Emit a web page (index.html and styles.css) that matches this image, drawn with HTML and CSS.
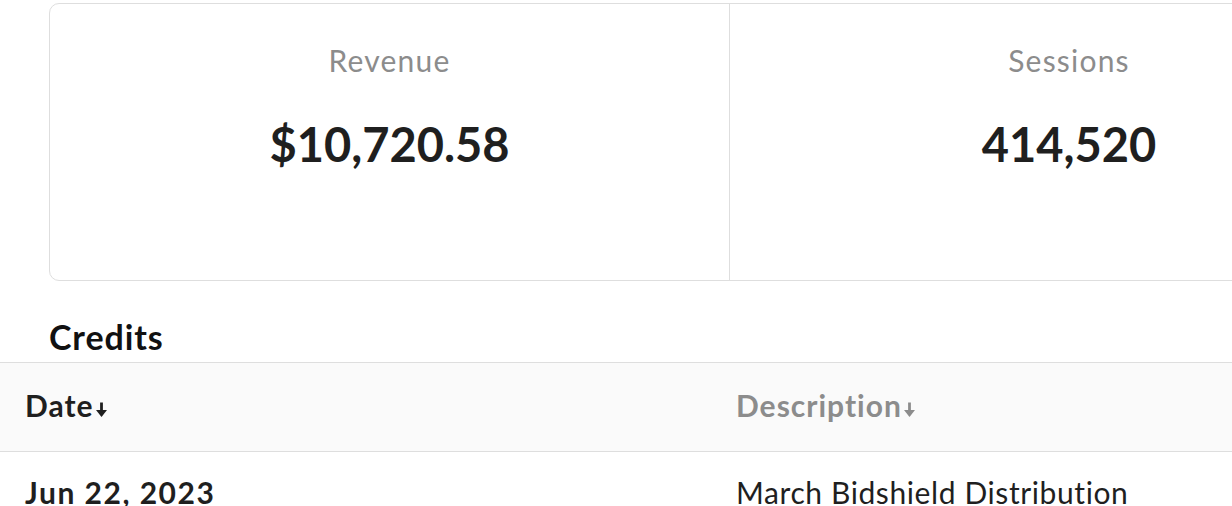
FILE: index.html
```html
<!DOCTYPE html>
<html lang="en">

<head>
    <meta charset="UTF-8">
    <title>Credits</title>
    <link rel="stylesheet" href="styles.css">
</head>

<body>
    <!-- stat cards -->
    <div class="stats">
        <div class="stat">
            <p class="stat-label">Revenue</p>
            <p class="stat-value">$10,720.58</p>
        </div>
        <div class="stat">
            <p class="stat-label">Sessions</p>
            <p class="stat-value">414,520</p>
        </div>
    </div>

    <h2 class="section-title">Credits</h2>

    <!-- credits table -->
    <table class="credits">
        <thead>
            <tr>
                <th class="col-date">Date<svg class="sort" viewBox="0 0 13 15"><path d="M6.5 0.5v9" stroke="currentColor" stroke-width="2.8"/><path d="M1 8h11l-5.5 7z" fill="currentColor"/></svg></th>
                <th class="col-desc muted">Description<svg class="sort" viewBox="0 0 13 15"><path d="M6.5 0.5v9" stroke="currentColor" stroke-width="2.8"/><path d="M1 8h11l-5.5 7z" fill="currentColor"/></svg></th>
            </tr>
        </thead>
        <tbody>
            <tr>
                <td class="col-date date">Jun 22, 2023</td>
                <td class="col-desc">March Bidshield Distribution</td>
            </tr>
        </tbody>
    </table>
</body>

</html>
```

FILE: styles.css
```css
body {
    margin: 0;
    padding: 0;
    width: 1232px;
    height: 506px;
    overflow: hidden;
    background-color: #fff;
    font-family: Lato, "Liberation Sans", sans-serif;
    color: #1f1f1f;
}

.stats {
    display: grid;
    grid-template-columns: 679px 679px;
    width: 1359px;
    height: 276px;
    margin: 3px 0 0 49px;
    border: 1px solid #dedede;
    border-radius: 10px;
}

.stat {
    text-align: center;
    padding-top: 38px;
}

.stat + .stat {
    border-left: 1px solid #dedede;
}

.stat-label {
    margin: 0;
    font-size: 30px;
    line-height: 36px;
    letter-spacing: 1.2px;
    color: #8c8c8c;
}

.stat-value {
    margin: 38px 0 0;
    font-size: 47px;
    line-height: 56px;
    font-weight: 700;
}

.section-title {
    margin: 34px 0 0 49px;
    font-size: 34px;
    line-height: 44px;
    letter-spacing: 0.9px;
    font-weight: 700;
    color: #111;
}

.credits {
    width: 1500px;
    table-layout: fixed;
    border-collapse: collapse;
    margin-top: 3px;
}

.credits th {
    text-align: left;
    vertical-align: top;
    padding: 24px 0 28px;
    font-size: 30px;
    line-height: 36px;
    letter-spacing: 1px;
    font-weight: 700;
    background-color: #fafafa;
    border-top: 1px solid #dedede;
    border-bottom: 1px solid #dedede;
}

.credits td {
    padding: 22px 0 0;
    font-size: 30px;
    line-height: 36px;
    letter-spacing: 0.6px;
    vertical-align: top;
    white-space: nowrap;
}

.col-date {
    width: 711px;
    padding-left: 25px !important;
}

.muted {
    color: #8c8c8c;
}

.date {
    font-weight: 700;
    letter-spacing: 1.5px !important;
}

/* sort arrow */
.sort {
    width: 13px;
    height: 15px;
    margin-left: 1px;
    vertical-align: baseline;
}
```
